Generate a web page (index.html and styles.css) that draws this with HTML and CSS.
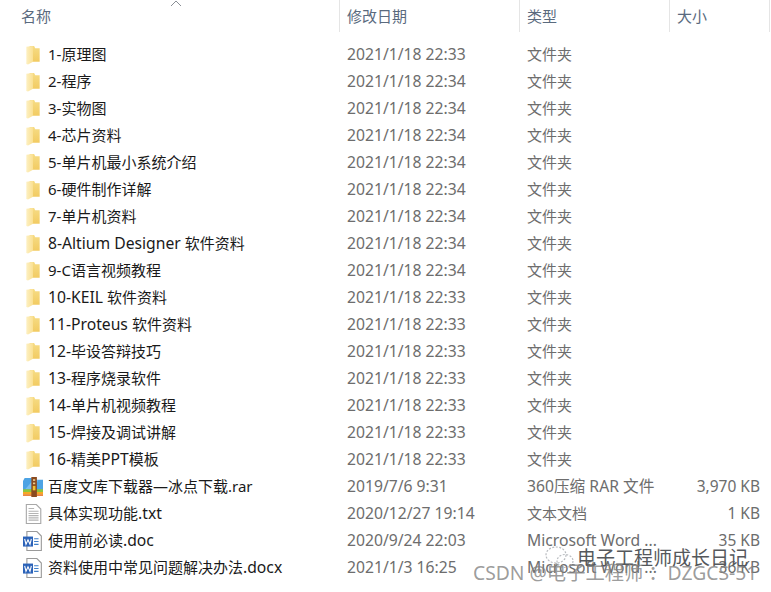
FILE: index.html
```html
<!DOCTYPE html>
<html lang="zh-CN">
<head>
  <meta charset="UTF-8" />
  <meta name="viewport" content="width=device-width, initial-scale=1.0" />
  <title>资料</title>
  <link rel="stylesheet" href="styles.css">
</head>
<body>
  <svg class="icon-defs" width="0" height="0">
    <defs>
      <linearGradient id="folderBack" x1="0" y1="0" x2="0" y2="1">
        <stop offset="0" stop-color="#f6dc85"/>
        <stop offset="1" stop-color="#f2cb62"/>
      </linearGradient>
      <linearGradient id="folderFront" x1="0" y1="0" x2="1" y2="0">
        <stop offset="0" stop-color="#fdf0c2"/>
        <stop offset="1" stop-color="#fae092"/>
      </linearGradient>
      <symbol id="folder" viewBox="0 0 18 18">
        <path d="M6 1h4l1 2h4v12H6z" fill="url(#folderBack)"/>
        <path d="M3 1.500 9 1v14l-4.500 2.500L3 17z" fill="url(#folderFront)"/>
      </symbol>
    </defs>
  </svg>

  <div class="explorer">
    <div class="header">
      <div class="col-head">名称
        <svg class="sort-arrow" width="12" height="7" viewBox="0 0 12 7"><path d="M1 6l5-5 5 5" fill="none" stroke="#8a8f96" stroke-width="1"/></svg>
      </div>
      <div class="col-head">修改日期</div>
      <div class="col-head">类型</div>
      <div class="col-head">大小</div>
    </div>

    <div class="rows">
      <div class="row"><div class="name"><svg class="ico"><use href="#folder"/></svg>1-原理图</div><div class="cell date">2021/1/18 22:33</div><div class="cell">文件夹</div><div class="size"></div></div>
      <div class="row"><div class="name"><svg class="ico"><use href="#folder"/></svg>2-程序</div><div class="cell date">2021/1/18 22:34</div><div class="cell">文件夹</div><div class="size"></div></div>
      <div class="row"><div class="name"><svg class="ico"><use href="#folder"/></svg>3-实物图</div><div class="cell date">2021/1/18 22:34</div><div class="cell">文件夹</div><div class="size"></div></div>
      <div class="row"><div class="name"><svg class="ico"><use href="#folder"/></svg>4-芯片资料</div><div class="cell date">2021/1/18 22:34</div><div class="cell">文件夹</div><div class="size"></div></div>
      <div class="row"><div class="name"><svg class="ico"><use href="#folder"/></svg>5-单片机最小系统介绍</div><div class="cell date">2021/1/18 22:34</div><div class="cell">文件夹</div><div class="size"></div></div>
      <div class="row"><div class="name"><svg class="ico"><use href="#folder"/></svg>6-硬件制作详解</div><div class="cell date">2021/1/18 22:34</div><div class="cell">文件夹</div><div class="size"></div></div>
      <div class="row"><div class="name"><svg class="ico"><use href="#folder"/></svg>7-单片机资料</div><div class="cell date">2021/1/18 22:34</div><div class="cell">文件夹</div><div class="size"></div></div>
      <div class="row"><div class="name"><svg class="ico"><use href="#folder"/></svg><span class="lat">8-Altium Designer&nbsp;</span>软件资料</div><div class="cell date">2021/1/18 22:34</div><div class="cell">文件夹</div><div class="size"></div></div>
      <div class="row"><div class="name"><svg class="ico"><use href="#folder"/></svg>9-C语言视频教程</div><div class="cell date">2021/1/18 22:34</div><div class="cell">文件夹</div><div class="size"></div></div>
      <div class="row"><div class="name"><svg class="ico"><use href="#folder"/></svg><span class="lat">10-KEIL&nbsp;</span>软件资料</div><div class="cell date">2021/1/18 22:33</div><div class="cell">文件夹</div><div class="size"></div></div>
      <div class="row"><div class="name"><svg class="ico"><use href="#folder"/></svg><span class="lat">11-Proteus&nbsp;</span>软件资料</div><div class="cell date">2021/1/18 22:33</div><div class="cell">文件夹</div><div class="size"></div></div>
      <div class="row"><div class="name"><svg class="ico"><use href="#folder"/></svg><span class="lat">12-</span>毕设答辩技巧</div><div class="cell date">2021/1/18 22:33</div><div class="cell">文件夹</div><div class="size"></div></div>
      <div class="row"><div class="name"><svg class="ico"><use href="#folder"/></svg><span class="lat">13-</span>程序烧录软件</div><div class="cell date">2021/1/18 22:33</div><div class="cell">文件夹</div><div class="size"></div></div>
      <div class="row"><div class="name"><svg class="ico"><use href="#folder"/></svg><span class="lat">14-</span>单片机视频教程</div><div class="cell date">2021/1/18 22:33</div><div class="cell">文件夹</div><div class="size"></div></div>
      <div class="row"><div class="name"><svg class="ico"><use href="#folder"/></svg><span class="lat">15-</span>焊接及调试讲解</div><div class="cell date">2021/1/18 22:33</div><div class="cell">文件夹</div><div class="size"></div></div>
      <div class="row"><div class="name"><svg class="ico"><use href="#folder"/></svg><span class="lat">16-</span>精美<span class="lat">PPT</span>模板</div><div class="cell date">2021/1/18 22:33</div><div class="cell">文件夹</div><div class="size"></div></div>

      <div class="row">
        <div class="name">
          <svg class="ico" viewBox="0 0 18 18">
            <path d="M0 3.500 1.500 1h6L9 2.500h9V12H0z" fill="#4da3e4"/>
            <path d="M2 11 9 3h5l-7 8z" fill="#78bdf0"/>
            <rect x="0" y="11" width="18" height="2.500" fill="#8cc63f"/>
            <rect x="0" y="13.500" width="18" height="2" fill="#f7a823"/>
            <rect x="0" y="15.500" width="18" height="1.500" fill="#e8792b"/>
            <rect x="7.500" y="0" width="5" height="18" fill="#8a4b20"/>
            <rect x="9" y="2" width="2" height="1.500" fill="#e9c88d"/>
            <rect x="9" y="5" width="2" height="1.500" fill="#e9c88d"/>
            <rect x="8.800" y="8" width="2.400" height="4" fill="#f2c230"/>
          </svg>百度文库下载器—冰点下载.rar
        </div>
        <div class="cell date">2019/7/6 9:31</div><div class="cell wide">360压缩 RAR 文件</div><div class="size">3,970 KB</div>
      </div>
      <div class="row">
        <div class="name">
          <svg class="ico" viewBox="0 0 18 18">
            <path d="M3 .5h9l4 4v13H3z" fill="#fff" stroke="#a8a8a8"/>
            <path d="M5 4h5M5 6.500h9M5 8.500h9M5 10.500h9M5 12.500h9M5 14.500h9" stroke="#b4b4b4"/>
          </svg>具体实现功能<span class="lat">.txt</span>
        </div>
        <div class="cell date">2020/12/27 19:14</div><div class="cell">文本文档</div><div class="size">1 KB</div>
      </div>
      <div class="row">
        <div class="name">
          <svg class="ico" viewBox="0 0 18 18">
            <path d="M3.500.5h9l4 4v13h-13z" fill="#fff" stroke="#9a9a9a"/>
            <path d="M10 7h4M10 9.500h4M10 12h4" stroke="#3f7fc9"/>
            <rect x="0" y="5" width="9" height="9" fill="#2b62b8"/>
            <path d="M1.500 7l1.200 5 1.800-4 1.800 4 1.200-5" fill="none" stroke="#fff" stroke-width="1"/>
          </svg>使用前必读<span class="lat">.doc</span>
        </div>
        <div class="cell date">2020/9/24 22:03</div><div class="cell wide">Microsoft Word ...</div><div class="size">35 KB</div>
      </div>
      <div class="row">
        <div class="name">
          <svg class="ico" viewBox="0 0 18 18">
            <path d="M3.500.5h9l4 4v13h-13z" fill="#fff" stroke="#9a9a9a"/>
            <path d="M10 7h4M10 9.500h4M10 12h4" stroke="#3f7fc9"/>
            <rect x="0" y="5" width="9" height="9" fill="#2b62b8"/>
            <path d="M1.500 7l1.200 5 1.800-4 1.800 4 1.200-5" fill="none" stroke="#fff" stroke-width="1"/>
          </svg>资料使用中常见问题解决办法<span class="lat">.docx</span>
        </div>
        <div class="cell date">2021/1/3 16:25</div><div class="cell wide">Microsoft Word ...</div><div class="size">36 KB</div>
      </div>
    </div>
  </div>

  <!-- watermarks lying over the list -->
  <div class="mark-wechat">
    <svg width="34" height="26" viewBox="0 0 34 26">
      <g fill="none" stroke="#b9bcc0" stroke-width="1.200" stroke-dasharray="2 1.500">
        <ellipse cx="13" cy="10" rx="10" ry="8"/>
        <ellipse cx="22" cy="16" rx="8" ry="6.500"/>
      </g>
    </svg>
    <span>电子工程师成长日记</span>
  </div>
  <div class="mark-csdn">CSDN @电子工程师 ：DZGCS-51</div>
</body>
</html>
```
FILE: styles.css
```css
* {
  box-sizing: border-box;
}
body {
  margin: 0;
  background: #fff;
  font-family: "Noto Sans", "Noto Sans CJK SC", sans-serif;
  font-size: 15px;
  overflow: hidden;
}
.icon-defs {
  display: block;
  height: 0;
}
.explorer {
  width: 771px;
}
.header,
.row {
  display: grid;
  grid-template-columns: 340px 180px 150px 100px;
}
.header {
  height: 32px;
}
.col-head {
  position: relative;
  padding: 6px 0 0 7px;
  border-right: 1px solid #e5e5e5;
  color: #5a6a7e;
  line-height: 20px;
}
.col-head:first-child {
  padding-left: 21px;
}
.sort-arrow {
  position: absolute;
  left: 170px;
  top: 0;
}
.rows {
  padding-top: 9px;
}
.row {
  height: 27px;
  line-height: 27px;
  color: #6d6d6d;
}
.name {
  display: flex;
  align-items: center;
  color: #1a1a1a;
  padding-left: 23px;
  white-space: nowrap;
}
.lat {
  font-size: 15.7px;
}
.ico {
  width: 20px;
  height: 20px;
  margin-right: 5px;
  flex: none;
}
.cell {
  padding-left: 7px;
  white-space: nowrap;
}
.date,
.wide {
  font-size: 15.7px;
}
.size {
  padding-right: 10px;
  text-align: right;
  font-size: 15.5px;
}
.mark-wechat {
  position: absolute;
  left: 543px;
  top: 545px;
  display: flex;
  align-items: center;
  color: #55585c;
  font-size: 19px;
  line-height: 26px;
  white-space: nowrap;
}
.mark-csdn {
  position: absolute;
  left: 473px;
  top: 561px;
  color: rgba(130, 130, 130, 0.8);
  font-size: 19.3px;
  line-height: 24px;
  white-space: nowrap;
}
```
